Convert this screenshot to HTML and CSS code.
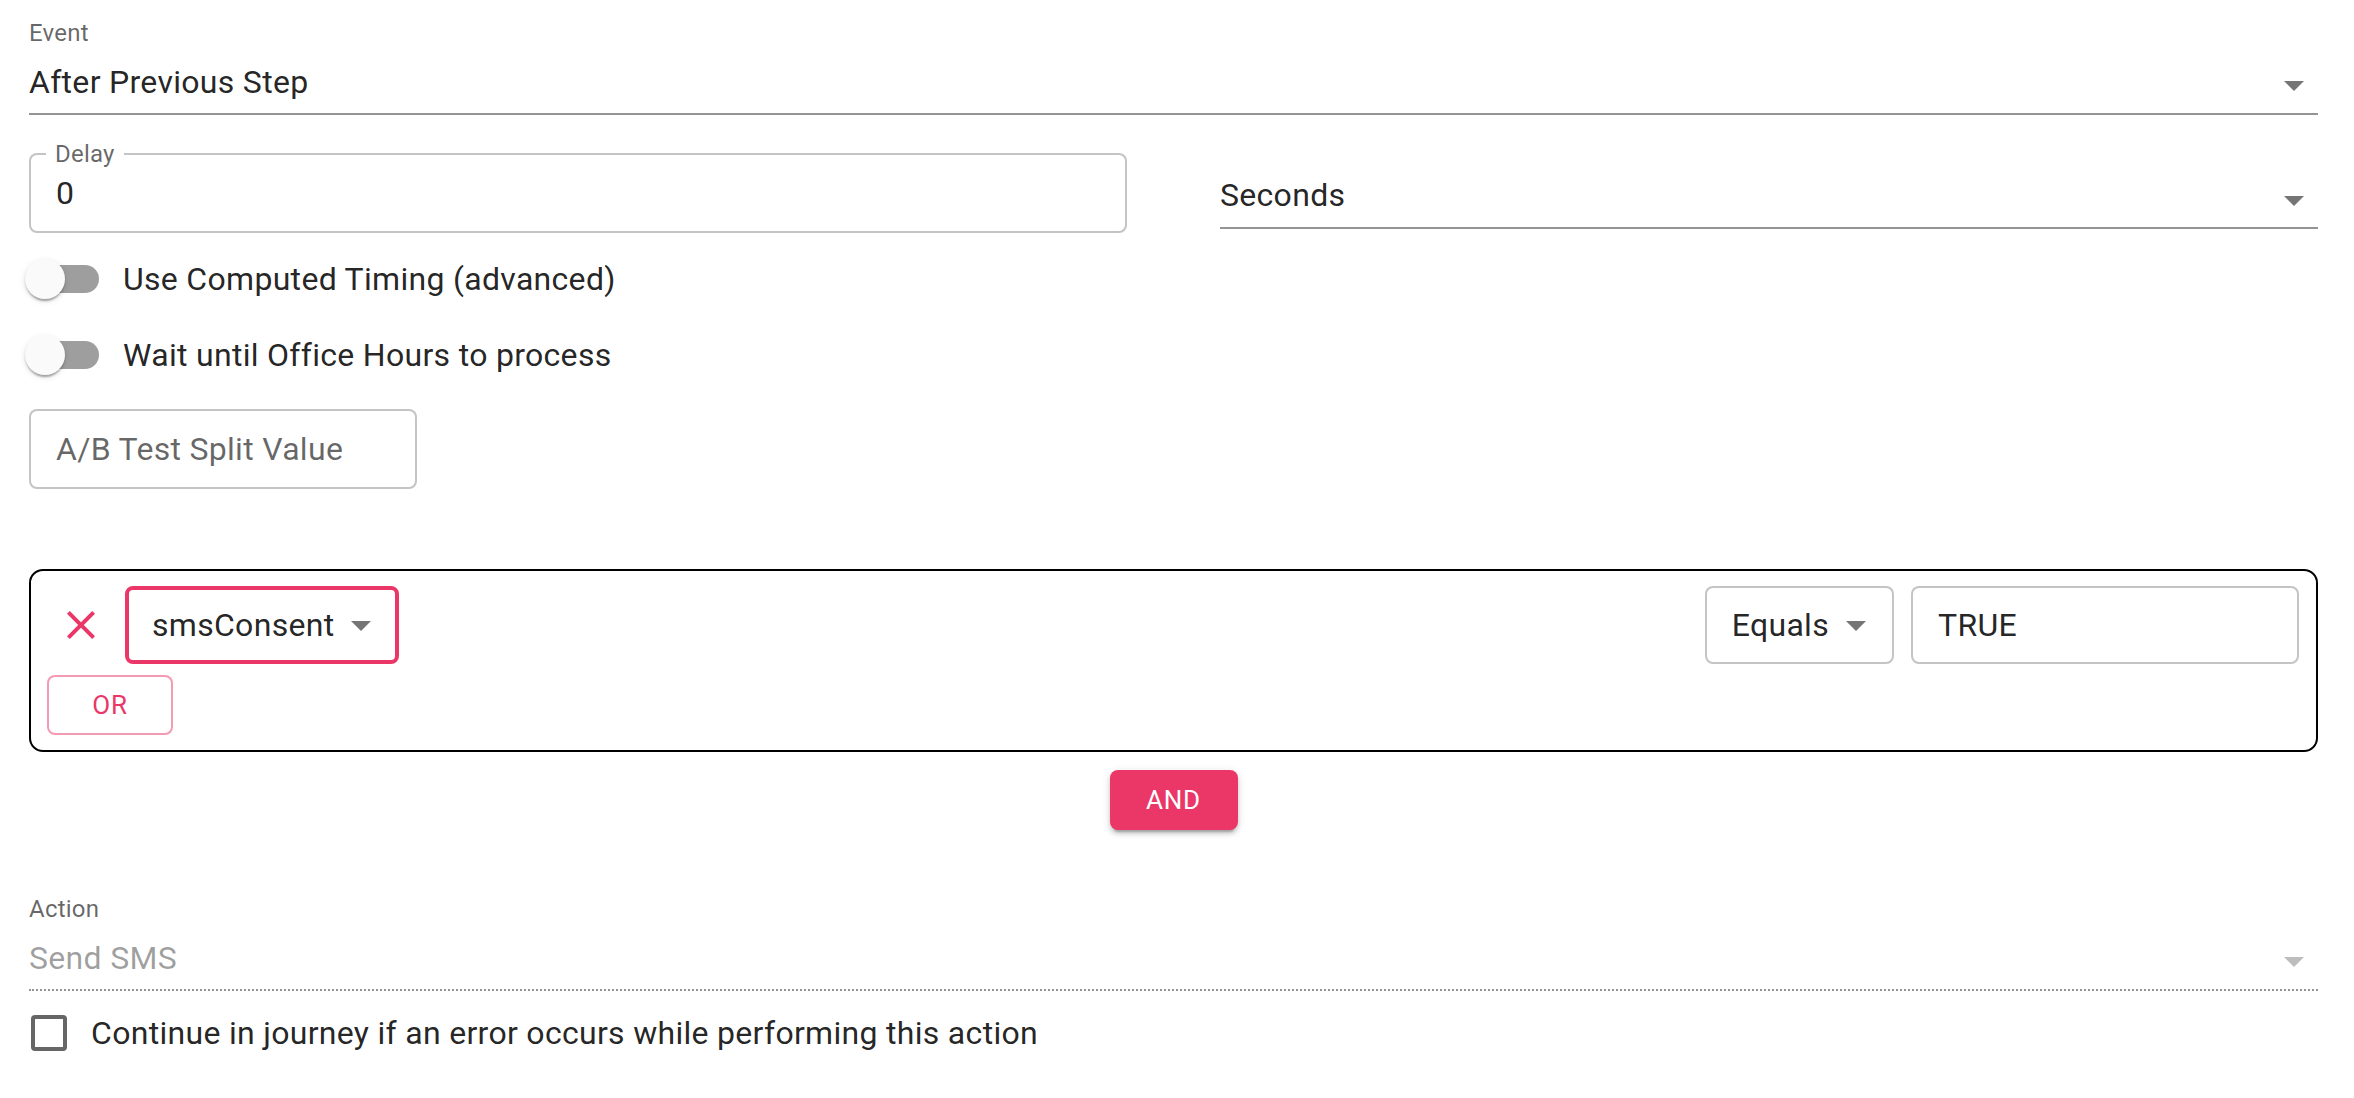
FILE: index.html
```html
<!doctype html>
<html lang="en">
  <head>
    <meta charset="UTF-8" />
    <meta name="viewport" content="width=device-width, initial-scale=1.0" />
    <title>Journey Step</title>
    <link rel="stylesheet" href="styles.css">
  </head>

  <body>
    <form class="step-form">
      <div class="std-field event-field">
        <span class="std-label">Event</span>
        <div class="std-select">
          <span class="std-value">After Previous Step</span>
          <svg class="drop-arrow" width="20" height="10" viewBox="0 0 20 10"><path d="M0 0h20L10 10z" /></svg>
        </div>
      </div>

      <div class="delay-row">
        <div class="outlined delay-box">
          <span class="notch-label">Delay</span>
          <span class="outlined-value">0</span>
        </div>
        <div class="std-select seconds-select">
          <span class="std-value">Seconds</span>
          <svg class="drop-arrow" width="20" height="10" viewBox="0 0 20 10"><path d="M0 0h20L10 10z" /></svg>
        </div>
      </div>

      <label class="switch-row first">
        <span class="switch"><span class="track"></span><span class="thumb"></span></span>
        <span class="control-label">Use Computed Timing (advanced)</span>
      </label>
      <label class="switch-row">
        <span class="switch"><span class="track"></span><span class="thumb"></span></span>
        <span class="control-label">Wait until Office Hours to process</span>
      </label>

      <div class="outlined split-box">
        <span class="outlined-placeholder">A/B Test Split Value</span>
      </div>

      <div class="condition-group">
        <div class="condition-row">
          <button type="button" class="remove-btn">
            <svg width="48" height="48" viewBox="0 0 24 24"><path d="M19 6.41 17.59 5 12 10.59 6.41 5 5 6.41 10.59 12 5 17.59 6.41 19 12 13.41 17.59 19 19 17.59 13.41 12z" /></svg>
          </button>
          <div class="outlined select-box focused">
            <span class="outlined-value">smsConsent</span>
            <svg class="drop-arrow" width="20" height="10" viewBox="0 0 20 10"><path d="M0 0h20L10 10z" /></svg>
          </div>
          <div class="condition-right">
            <div class="outlined select-box">
              <span class="outlined-value">Equals</span>
              <svg class="drop-arrow" width="20" height="10" viewBox="0 0 20 10"><path d="M0 0h20L10 10z" /></svg>
            </div>
            <div class="outlined value-box">
              <span class="outlined-value">TRUE</span>
            </div>
          </div>
        </div>
        <button type="button" class="or-btn">Or</button>
      </div>

      <div class="and-wrap">
        <button type="button" class="and-btn">And</button>
      </div>

      <div class="std-field action-field">
        <span class="std-label">Action</span>
        <div class="std-select disabled">
          <span class="std-value">Send SMS</span>
          <svg class="drop-arrow" width="20" height="10" viewBox="0 0 20 10"><path d="M0 0h20L10 10z" /></svg>
        </div>
      </div>

      <label class="check-row">
        <span class="checkbox"><span class="check-box"></span></span>
        <span class="control-label">Continue in journey if an error occurs while performing this action</span>
      </label>
    </form>
  </body>
</html>
```

FILE: styles.css
```css
* {
  margin: 0;
  padding: 0;
  box-sizing: border-box;
  font-family: 'Roboto', 'Liberation Sans', sans-serif;
  letter-spacing: 0.00938em;
}

html,
body {
  background-color: white;
}

.step-form {
  display: flex;
  flex-direction: column;
  padding: 0 36px 0 29px;
}

/* standard (underlined) selects */
.std-label {
  display: block;
  font-size: 24px;
  line-height: 24px;
  color: rgba(0, 0, 0, 0.6);
}

.event-field {
  padding-top: 21px;
}

.std-select {
  display: flex;
  align-items: center;
  justify-content: space-between;
  padding: 18px 0 12px;
  border-bottom: 2px solid rgba(0, 0, 0, 0.42);
}

.std-value {
  font-size: 32px;
  line-height: 38px;
  color: rgba(0, 0, 0, 0.87);
}

.drop-arrow {
  flex-shrink: 0;
  fill: #757575;
}

.std-select .drop-arrow {
  margin: 8px 14px 0 0;
}

.std-select.disabled {
  border-bottom: 2px dotted rgba(0, 0, 0, 0.42);
}

.std-select.disabled .std-value {
  color: rgba(0, 0, 0, 0.38);
}

.std-select.disabled .drop-arrow {
  fill: #bdbdbd;
}

/* delay row */
.delay-row {
  display: grid;
  grid-template-columns: 1fr 1fr;
  column-gap: 93px;
  align-items: start;
  margin-top: 38px;
}

.seconds-select {
  padding: 23px 0 13px;
}

.seconds-select .drop-arrow {
  margin-top: 12px;
}

/* outlined inputs */
.outlined {
  position: relative;
  display: flex;
  align-items: center;
  height: 80px;
  padding: 0 26px 0 25px;
  border: 2px solid rgba(0, 0, 0, 0.23);
  border-radius: 8px;
  background-color: white;
}

.outlined-value {
  font-size: 32px;
  line-height: 38px;
  color: rgba(0, 0, 0, 0.87);
  white-space: nowrap;
}

.outlined-placeholder {
  font-size: 32px;
  line-height: 38px;
  color: rgba(0, 0, 0, 0.6);
  white-space: nowrap;
}

.notch-label {
  position: absolute;
  top: -13px;
  left: 15px;
  padding: 0 9px;
  font-size: 24px;
  line-height: 24px;
  color: rgba(0, 0, 0, 0.6);
  background-color: white;
}

/* switches */
.switch-row {
  display: flex;
  align-items: center;
  height: 76px;
  margin-left: -22px;
  cursor: pointer;
}

.switch-row.first {
  margin-top: 8px;
}

.switch {
  position: relative;
  width: 116px;
  height: 76px;
  flex-shrink: 0;
}

.track {
  position: absolute;
  left: 24px;
  top: 24px;
  width: 68px;
  height: 28px;
  border-radius: 14px;
  background-color: rgba(0, 0, 0, 0.38);
}

.thumb {
  position: absolute;
  left: 18px;
  top: 18px;
  width: 40px;
  height: 40px;
  border-radius: 50%;
  background-color: #fafafa;
  box-shadow:
    0 4px 2px -2px rgba(0, 0, 0, 0.2),
    0 2px 2px 0 rgba(0, 0, 0, 0.14),
    0 2px 6px 0 rgba(0, 0, 0, 0.12);
}

.control-label {
  font-size: 32px;
  line-height: 38px;
  color: rgba(0, 0, 0, 0.87);
}

.split-box {
  width: 388px;
  margin-top: 16px;
}

/* condition group */
.condition-group {
  margin-top: 80px;
  padding: 15px 17px 15px 16px;
  border: 2px solid #000;
  border-radius: 14px;
}

.condition-row {
  display: flex;
  align-items: center;
  height: 78px;
}

.remove-btn {
  display: flex;
  width: 48px;
  height: 48px;
  margin: 0 20px 0 10px;
  background: none;
  border: none;
  cursor: pointer;
}

.remove-btn svg {
  fill: #ea3768;
}

.select-box {
  height: 78px;
  cursor: pointer;
}

.select-box .drop-arrow {
  margin: 2px 0 0 17px;
}

.select-box.focused {
  padding: 0 24px 0 23px;
  border: 4px solid #ea3768;
}

.condition-right {
  display: flex;
  gap: 17px;
  margin-left: auto;
}

.value-box {
  width: 388px;
  height: 78px;
}

.or-btn {
  width: 126px;
  height: 60px;
  margin-top: 11px;
  background-color: white;
  border: 2px solid rgba(234, 55, 104, 0.5);
  border-radius: 8px;
  color: #ea3768;
  font-size: 26px;
  font-weight: 400;
  letter-spacing: 0.02857em;
  text-transform: uppercase;
  cursor: pointer;
}

.and-wrap {
  display: flex;
  justify-content: center;
  margin-top: 18px;
}

.and-btn {
  width: 128px;
  height: 60px;
  background-color: #ea3768;
  border: none;
  border-radius: 8px;
  color: white;
  font-size: 26px;
  font-weight: 400;
  letter-spacing: 0.02857em;
  text-transform: uppercase;
  cursor: pointer;
  box-shadow:
    0 6px 2px -4px rgba(0, 0, 0, 0.2),
    0 4px 4px 0 rgba(0, 0, 0, 0.14),
    0 2px 10px 0 rgba(0, 0, 0, 0.12);
}

/* action */
.action-field {
  margin-top: 67px;
}

.check-row {
  display: flex;
  align-items: center;
  height: 84px;
  margin-left: -22px;
  cursor: pointer;
}

.checkbox {
  display: flex;
  align-items: center;
  justify-content: center;
  width: 84px;
  height: 84px;
  flex-shrink: 0;
}

.check-box {
  width: 36px;
  height: 36px;
  border: 4px solid rgba(0, 0, 0, 0.6);
  border-radius: 4px;
}
```
